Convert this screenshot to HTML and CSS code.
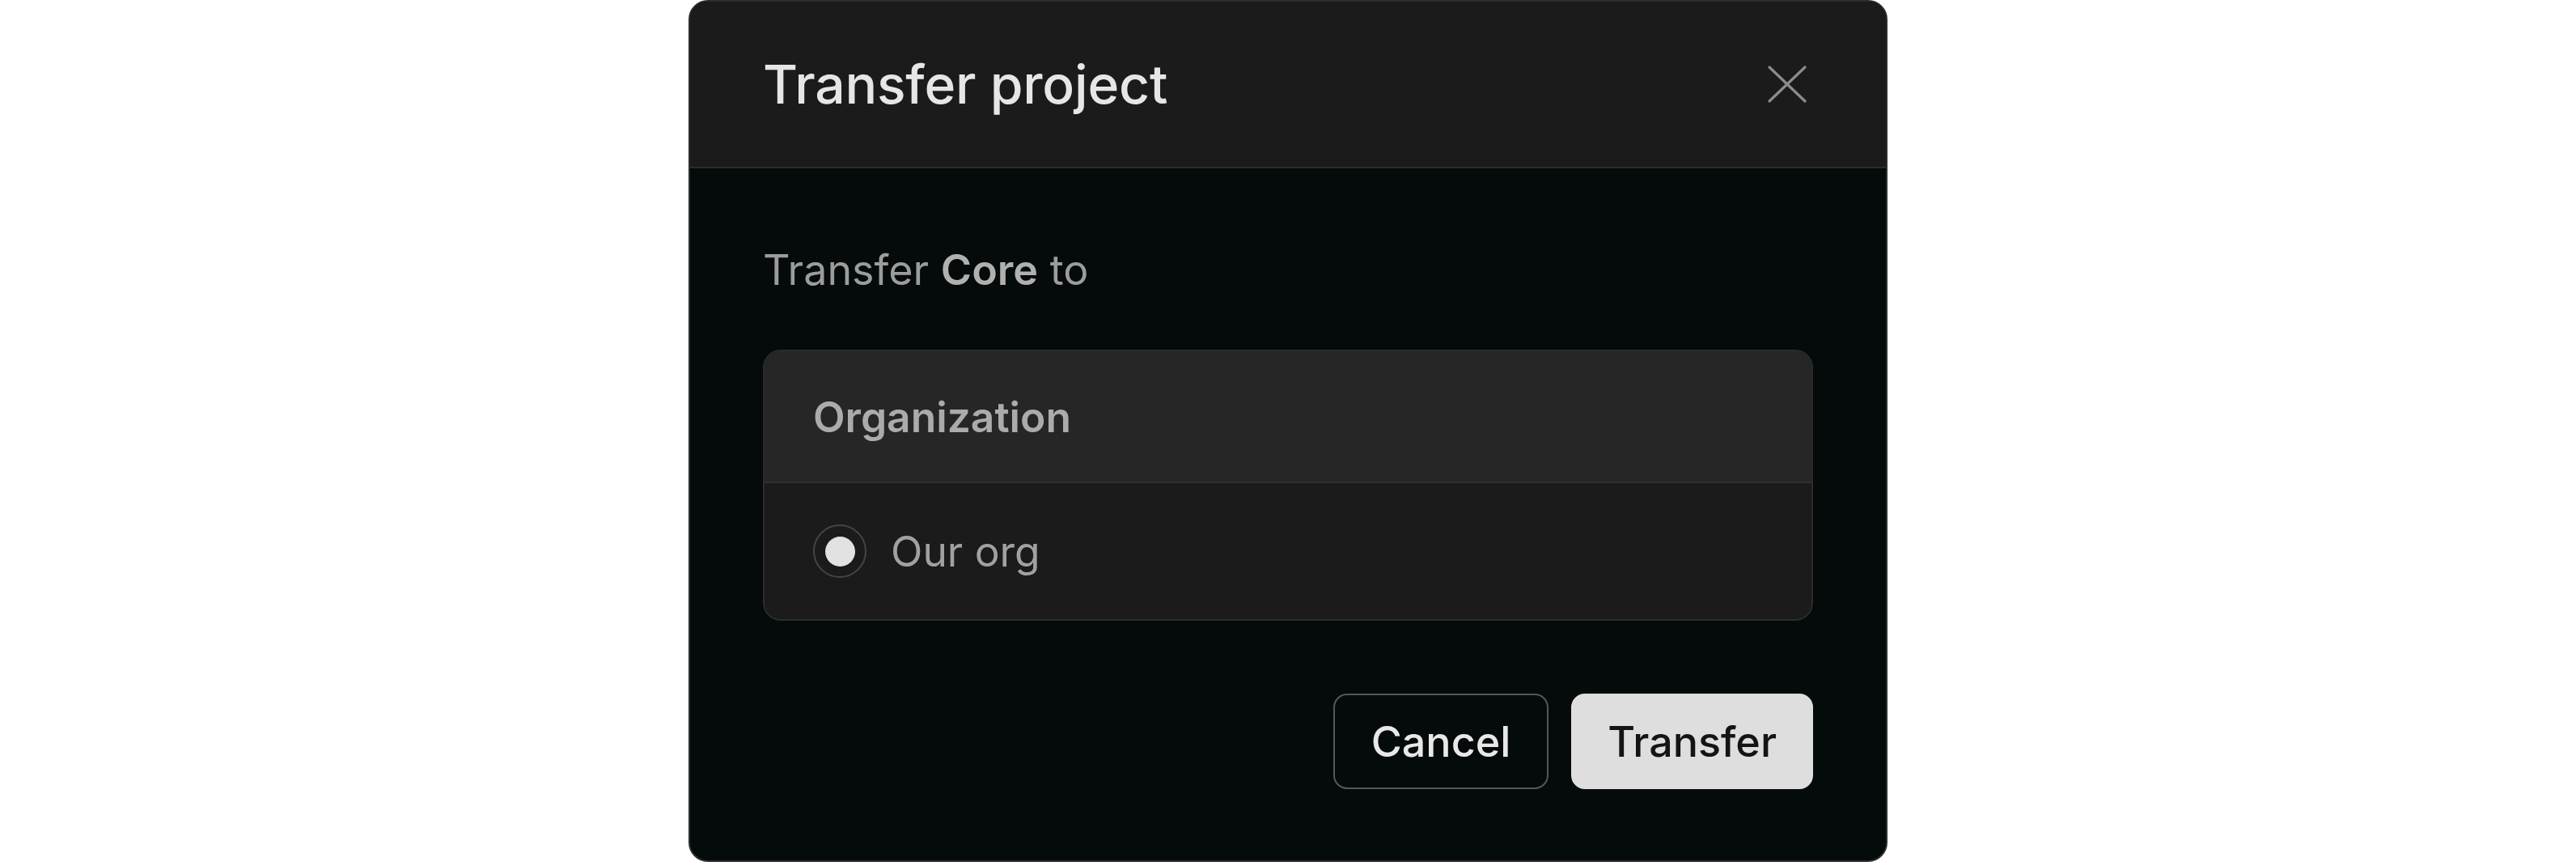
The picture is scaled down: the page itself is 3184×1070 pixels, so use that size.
FILE: index.html
```html
<!DOCTYPE html>
<html lang="en">
<head>
<meta charset="utf-8">
<title>Transfer project</title>
<link rel="stylesheet" href="styles.css">
</head>
<body>
<div class="dialog" role="dialog" aria-labelledby="dlg-title">
  <header class="dialog-header">
    <h2 id="dlg-title" class="dialog-title">Transfer project</h2>
    <button class="close-btn" aria-label="Close">
      <svg width="48" height="48" viewBox="0 0 48 48" fill="none" stroke="currentColor" stroke-width="3.2" stroke-linecap="round">
        <path d="M2 3L46 45M46 3L2 45"/>
      </svg>
    </button>
  </header>
  <div class="dialog-body">
    <p class="lead">Transfer <strong>Core</strong> to</p>
    <div class="option-card">
      <div class="option-card-head">Organization</div>
      <label class="option-row">
        <span class="radio"><span class="radio-dot"></span></span>
        <span class="option-label">Our org</span>
      </label>
    </div>
    <div class="actions">
      <button class="btn btn-outline">Cancel</button>
      <button class="btn btn-primary">Transfer</button>
    </div>
  </div>
</div>
</body>
</html>
```

FILE: styles.css
```css
* { box-sizing: border-box; }

html, body {
  margin: 0;
  padding: 0;
  background: #ffffff;
  font-family: "Inter", "Noto Sans", "Liberation Sans", sans-serif;
}

.dialog {
  width: 1482px;
  margin: 0 auto;
  background: #050a0b;
  border: 2px solid #2e2e2e;
  border-radius: 24px;
  overflow: hidden;
}

.dialog-header {
  height: 206px;
  background: #1b1b1b;
  border-bottom: 2px solid #2c2c2c;
  display: flex;
  align-items: center;
  justify-content: space-between;
  padding: 0 98px 0 90px;
}

.dialog-title {
  margin: 0;
  font-size: 66px;
  font-weight: 500;
  color: #e6e6e6;
  letter-spacing: -0.2px;
}

.close-btn {
  background: none;
  border: 0;
  padding: 0;
  color: #8c8c8c;
  display: flex;
  cursor: pointer;
}

.dialog-body {
  padding: 88px 90px 88px;
}

.lead {
  margin: 0;
  font-size: 52px;
  line-height: 76px;
  color: #9c9c9c;
}

.lead strong {
  font-weight: 600;
  color: #b0b0b0;
}

.option-card {
  margin-top: 60px;
  border: 2px solid #2b2b2b;
  border-radius: 22px;
  overflow: hidden;
  background: #1b1b1b;
}

.option-card-head {
  height: 163px;
  display: flex;
  align-items: center;
  padding: 0 60px;
  background: #262626;
  border-bottom: 2px solid #2f2f2f;
  font-size: 51.5px;
  font-weight: 600;
  color: #ababab;
}

.option-row {
  height: 168px;
  display: flex;
  align-items: center;
  gap: 30px;
  padding: 0 60px;
}

.radio {
  width: 66px;
  height: 66px;
  border-radius: 50%;
  border: 2px solid #454545;
  display: flex;
  align-items: center;
  justify-content: center;
  flex: none;
}

.radio-dot {
  width: 37px;
  height: 37px;
  border-radius: 50%;
  background: #e2e2e2;
}

.option-label {
  font-size: 51.5px;
  color: #a1a1a1;
}

.actions {
  margin-top: 90px;
  display: flex;
  justify-content: flex-end;
  gap: 28px;
}

.btn {
  height: 118px;
  border-radius: 17px;
  font-family: inherit;
  font-size: 52px;
  font-weight: 500;
  padding: 0 45px;
  cursor: pointer;
}

.btn-outline {
  background: transparent;
  border: 2px solid #575757;
  color: #e8e8e8;
}

.btn-primary {
  background: #dedede;
  border: 2px solid #dedede;
  color: #141414;
  padding: 0 43px;
}
```
